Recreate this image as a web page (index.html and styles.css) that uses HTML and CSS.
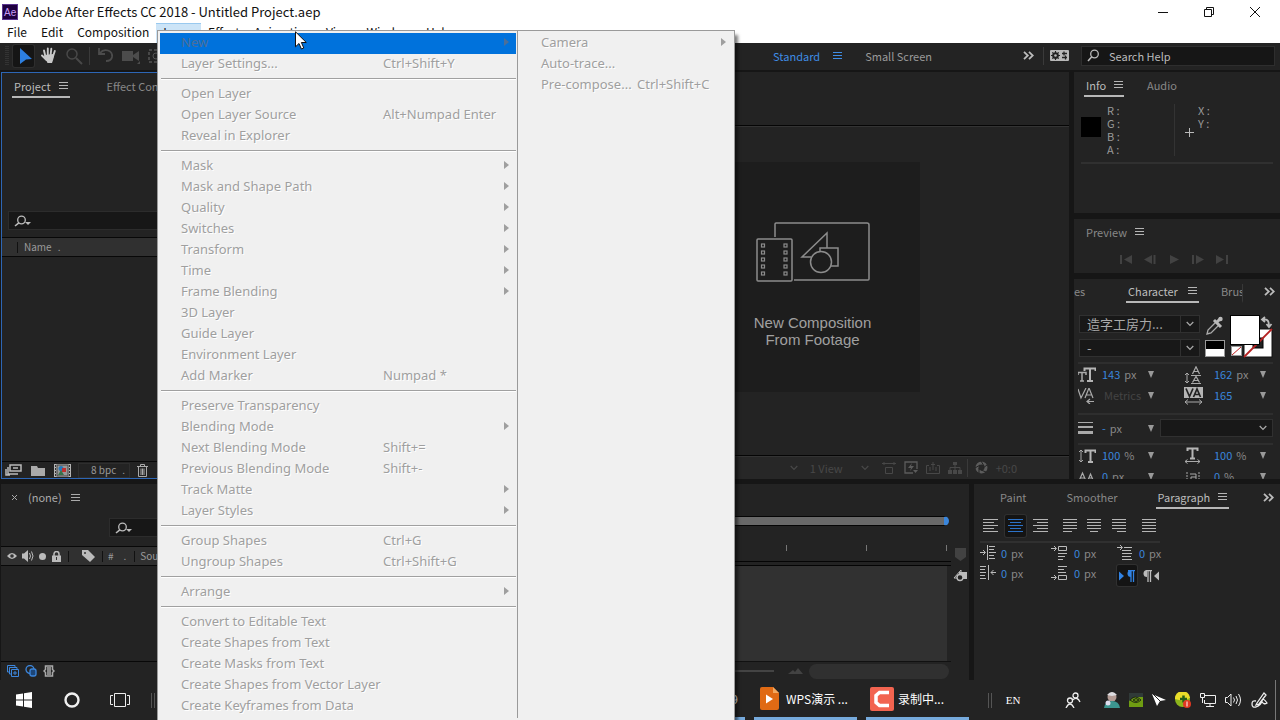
FILE: index.html
```html
<!DOCTYPE html>
<html lang="en">
<head>
<meta charset="utf-8">
<title>Adobe After Effects CC 2018 - Untitled Project.aep</title>
<link rel="stylesheet" href="styles.css">
</head>
<body>
<svg class="defs" aria-hidden="true">
  <symbol id="burger" viewBox="0 0 9 9"><path d="M0 1.5h9M0 4.5h9M0 7.5h9" stroke="currentColor" fill="none"/></symbol>
  <symbol id="more" viewBox="0 0 11 9"><path d="M1 .8l3.8 3.7L1 8.2M6 .8l3.8 3.7L6 8.2" stroke="currentColor" stroke-width="1.8" fill="none"/></symbol>
  <symbol id="find" viewBox="0 0 18 14"><circle cx="7.5" cy="5" r="3.8" stroke="currentColor" stroke-width="1.3" fill="none"/><path d="M4.8 7.8L1 12" stroke="currentColor" stroke-width="1.6"/></symbol>
  <symbol id="findmenu" viewBox="0 0 18 14"><circle cx="7.5" cy="6" r="3.8" stroke="currentColor" stroke-width="1.3" fill="none"/><path d="M4.8 8.8L1 12" stroke="currentColor" stroke-width="1.6"/><path d="M11 8h6l-3 3z" fill="currentColor"/></symbol>
  <symbol id="down" viewBox="0 0 8 6"><path d="M.7 1L4 4.500 7.300 1" stroke="currentColor" stroke-width="1.2" fill="none"/></symbol>
  <symbol id="tri" viewBox="0 0 6 7"><path d="M0 0h6L3 7z" fill="currentColor"/></symbol>
  <symbol id="sub" viewBox="0 0 5 8"><path d="M0 0l5 4-5 4z" fill="currentColor"/></symbol>
</svg>

<header class="titlebar">
  <svg class="logo" width="16" height="16" viewBox="0 0 16 16"><rect width="16" height="16" fill="#1f0040"/><rect x=".5" y=".5" width="15" height="15" fill="none" stroke="#5b3590"/><text x="2" y="12" class="logo-text">Ae</text></svg>
  <h1>Adobe After Effects CC 2018 - Untitled Project.aep</h1>
  <div class="window-buttons">
    <button aria-label="Minimize"><svg width="10" height="10"><path d="M0 5.500h10" stroke="#111"/></svg></button>
    <button aria-label="Restore"><svg width="10" height="10"><path d="M.5 2.500h7v7h-7zM2.500 2.500v-2h7v7h-2" fill="none" stroke="#111"/></svg></button>
    <button aria-label="Close"><svg width="10" height="10"><path d="M0 0l10 10M10 0L0 10" stroke="#111"/></svg></button>
  </div>
</header>
<nav class="menubar">
  <button>File</button><button>Edit</button><button>Composition</button><button class="open">Layer</button><button>Effect</button><button>Animation</button><button>View</button><button>Window</button><button>Help</button>
</nav>

<div class="toolbar">
  <svg class="grip" width="4" height="20"><path d="M1 0v20M3 0v20" stroke="#444" stroke-dasharray="1 1"/></svg>
  <button class="tool selected" aria-label="Selection"><svg width="20" height="20" viewBox="0 0 20 20"><path d="M6 2l12 11-6 .5L6 18z" fill="#2d7fe0"/></svg></button>
  <button class="tool" aria-label="Hand"><svg width="18" height="18" viewBox="0 0 18 18"><path d="M5.500 10L4 3.500M7.800 9V1.500M10.500 9l.8-7.200M12.800 10l2-6M6.500 13L2 8.500" stroke="#c8c8c8" stroke-width="1.900" stroke-linecap="round"/><path d="M4.500 8l9-1c1 3-.5 6-1.500 9H7.500C6.500 13 4.500 12 4.500 8z" fill="#c8c8c8"/></svg></button>
  <button class="tool" aria-label="Zoom"><svg width="18" height="18" viewBox="0 0 18 18"><circle cx="7" cy="7" r="5" fill="none" stroke="#484848" stroke-width="1.500"/><path d="M11 11l6 6" stroke="#484848" stroke-width="2"/></svg></button>
  <span class="divider"></span>
  <button class="tool" aria-label="Rotate"><svg width="18" height="18" viewBox="0 0 18 18"><path d="M2 1v6h6M3 6c4-5 13-3 12 4-.5 3-3 4-6 4" fill="none" stroke="#4c4c4c" stroke-width="1.800"/></svg></button>
  <button class="tool" aria-label="Camera"><svg width="20" height="18" viewBox="0 0 20 18"><path d="M1 4h11v10H1zM12 8l6-4v10l-6-4z" fill="#4c4c4c"/><path d="M16 17h3v-3z" fill="#4c4c4c"/></svg></button>
  <button class="tool" aria-label="Pan behind"><svg width="18" height="18" viewBox="0 0 18 18"><rect x="2" y="3" width="13" height="12" fill="none" stroke="#555" stroke-width="1.500" stroke-dasharray="3 2"/><circle cx="9" cy="9" r="3" fill="none" stroke="#555"/></svg></button>
  <div class="workspaces">
    <button class="current">Standard <svg width="9" height="9"><use href="#burger"/></svg></button>
    <button>Small Screen</button>
  </div>
  <button class="more" aria-label="More workspaces"><svg width="11" height="9"><use href="#more"/></svg></button>
  <span class="divider"></span>
  <button class="sync" aria-label="Sync settings"><svg width="19" height="11" viewBox="0 0 19 11"><rect width="19" height="11" rx="1" fill="#b8b8b8"/><circle cx="5.500" cy="5.500" r="2.600" fill="none" stroke="#222" stroke-width="1.500"/><path d="M5.500 1v9M1 5.500h9M2.300 2.300l6.400 6.400M8.700 2.300L2.300 8.700" stroke="#222" stroke-width="1.100"/><circle cx="5.500" cy="5.500" r="1.300" fill="#b8b8b8"/><path d="M12 3.500h5M14 1.500v4M12 7.500h5M15.500 5.500v4" stroke="#222" stroke-width="1.300"/></svg></button>
  <label class="help-search"><svg width="18" height="14"><use href="#find"/></svg><input type="text" placeholder="Search Help" aria-label="Search Help"></label>
</div>

<main class="workspace">
  <div class="upper">
    <section class="panel project">
      <div class="tabs"><button class="tab active">Project <svg width="9" height="9"><use href="#burger"/></svg></button><button class="tab">Effect Controls</button></div>
      <label class="search"><svg width="18" height="14"><use href="#findmenu"/></svg><input type="text" aria-label="Search project"></label>
      <div class="list-head"><i></i><span>Name</span><span>.</span></div>
      <div class="list-body"></div>
      <div class="project-foot">
        <svg width="17" height="12" viewBox="0 0 17 12"><path d="M5 1h11v6H5z" fill="none" stroke="#bbb" stroke-width="1.500"/><path d="M8 4h5" stroke="#bbb" stroke-width="1.500"/><path d="M3 3v7h10M1 5v6h4" fill="none" stroke="#bbb" stroke-width="1.500"/></svg>
        <svg width="14" height="11" viewBox="0 0 14 11"><path d="M0 1h6l1 2h7v8H0z" fill="#aaa"/></svg>
        <svg width="17" height="13" viewBox="0 0 17 13"><rect width="17" height="13" fill="#b5b5b5"/><path d="M1.500 1v12M15.500 1v12" stroke="#333" stroke-dasharray="2 1"/><rect x="3" y="1" width="11" height="11" fill="#999" stroke="#444"/><circle cx="7" cy="4.500" r="2.500" fill="#2878b8"/><rect x="8" y="4" width="4" height="4" fill="#c03030"/><path d="M4 11l3-5 3 5z" fill="#38704a"/></svg>
        <button class="bpc">8 bpc <span>.</span></button>
        <svg width="11" height="13" viewBox="0 0 11 13"><path d="M0 2.500h11M3.500 2V.5h4V2M1.500 3v9.500h8V3M4 4.500V11M5.500 4.500V11M7 4.500V11" fill="none" stroke="#aaa"/></svg>
      </div>
    </section>
    <section class="panel comp">
      <div class="comp-head"></div>
      <div class="comp-view">
        <button class="new-comp">
          <svg width="114" height="60" viewBox="0 0 114 60" fill="none" stroke="#8c8c8c" stroke-width="1.500"><path d="M19 15V2q0-1 1-1h91q2 0 2 2v54q0 1-1 1H38"/><rect x="1" y="17" width="35" height="42" rx="1"/><g stroke-width="1.200"><rect x="5.500" y="22" width="3" height="3"/><rect x="5.500" y="29" width="3" height="3"/><rect x="5.500" y="36" width="3" height="3"/><rect x="5.500" y="43" width="3" height="3"/><rect x="5.500" y="50" width="3" height="3"/><rect x="28" y="22" width="3" height="3"/><rect x="28" y="29" width="3" height="3"/><rect x="28" y="36" width="3" height="3"/><rect x="28" y="43" width="3" height="3"/><rect x="28" y="50" width="3" height="3"/></g><path d="M55 35H46l25-24v15M64 29v-3h18v18h-7"/><circle cx="65" cy="40" r="10.500"/></svg>
          <span>New Composition<br>From Footage</span>
        </button>
      </div>
      <div class="comp-foot">
        <svg width="8" height="6"><use href="#down"/></svg>
        <span class="view">1 View <svg width="8" height="6"><use href="#down"/></svg></span>
        <svg width="14" height="12" viewBox="0 0 14 12" fill="none" stroke="currentColor"><path d="M0 1.500h14M2 0v3M12 0v3M3.500 5.500h7v6h-7z"/></svg>
        <svg class="lit" width="14" height="13" viewBox="0 0 14 13" fill="none" stroke="currentColor" stroke-width="1.300"><path d="M9 12H1V1h12v7"/><path d="M8 2L4 7h3l-1 3 4-5H7z" fill="currentColor" stroke="none"/><path d="M9 9h5l-2.500 3z" fill="currentColor" stroke="none"/></svg>
        <svg width="14" height="12" viewBox="0 0 14 12" fill="none" stroke="currentColor"><path d="M3 3.500H.5v8h13v-8H11M7 0v8M4 5v4M10 5v4M5 2.500h4"/></svg>
        <svg width="14" height="12" viewBox="0 0 14 12"><path d="M5 0h4v3H5zM0 8h4v4H0zM5 8h4v4H5zM10 8h4v4h-4z" fill="currentColor"/><path d="M7 3v5M2 8V5.500h10V8" fill="none" stroke="currentColor"/></svg>
        <span class="divider"></span>
        <svg class="lit" width="13" height="13" viewBox="0 0 13 13"><circle cx="6.500" cy="6.500" r="4.500" fill="none" stroke="currentColor" stroke-width="3"/><path d="M6 0l3 5M12 4L8 7M11 11L6 9M4 12l0-5M0 7l5-3" stroke="#232323"/></svg>
        <span>+0:0</span>
      </div>
    </section>
    <div class="side">
      <section class="panel info">
        <div class="tabs"><button class="tab active">Info <svg width="9" height="9"><use href="#burger"/></svg></button><button class="tab">Audio</button></div>
        <div class="readout"><span class="swatch"></span><dl class="rgba"><dt>R :</dt><dt>G :</dt><dt>B :</dt><dt>A :</dt></dl><svg class="cross" width="9" height="9"><path d="M4.500 0v9M0 4.500h9" stroke="#bbb"/></svg><dl class="xy"><dt>X :</dt><dt>Y :</dt></dl></div>
      </section>
      <section class="panel preview">
        <div class="tabs"><button class="tab">Preview <svg width="9" height="9"><use href="#burger"/></svg></button></div>
        <div class="transport">
          <button aria-label="First frame"><svg width="12" height="9"><path d="M1 0v9" stroke="currentColor" stroke-width="2"/><path d="M12 0v9L4 4.500z" fill="currentColor"/></svg></button>
          <button aria-label="Previous frame"><svg width="12" height="9"><path d="M10.500 0v9" stroke="currentColor" stroke-width="2"/><path d="M8 0v9L0 4.500z" fill="currentColor"/></svg></button>
          <button aria-label="Play"><svg width="12" height="9"><path d="M2 0v9l9-4.500z" fill="currentColor"/></svg></button>
          <button aria-label="Next frame"><svg width="12" height="9"><path d="M1 0v9" stroke="currentColor" stroke-width="2"/><path d="M4 0v9l8-4.500z" fill="currentColor"/></svg></button>
          <button aria-label="Last frame"><svg width="12" height="9"><path d="M11 0v9" stroke="currentColor" stroke-width="2"/><path d="M0 0v9l8-4.500z" fill="currentColor"/></svg></button>
        </div>
      </section>
      <section class="panel character">
        <div class="tabs"><button class="tab cut-left">es</button><button class="tab active">Character <svg width="9" height="9"><use href="#burger"/></svg></button><button class="tab cut">Brus</button><button class="more" aria-label="More panels"><svg width="11" height="9"><use href="#more"/></svg></button></div>
        <div class="font-row">
          <div class="fonts">
            <div class="dropdown"><select aria-label="Font family"><option>造字工房力...</option></select><svg width="8" height="6"><use href="#down"/></svg></div>
            <div class="dropdown"><select aria-label="Font style"><option>-</option></select><svg width="8" height="6"><use href="#down"/></svg></div>
          </div>
          <svg class="colors" width="68" height="44" viewBox="0 0 68 44"><path d="M2 19l1-4 8-8 3 3-8 8z" fill="none" stroke="#aaa" stroke-width="1.300"/><path d="M9 5l7 7M12 7l4-4" stroke="#bbb" stroke-width="3"/><circle cx="15.500" cy="4" r="2.200" fill="#bbb"/><rect x=".5" y="25.500" width="19" height="16" fill="#fff" stroke="#999"/><rect x="1" y="26" width="18" height="8" fill="#000"/><rect x="39" y="14" width="28" height="28" fill="#fff" stroke="#111"/><rect x="48" y="23" width="10" height="10" fill="#222" stroke="#000"/><path d="M39 42l28-28" stroke="#b52222" stroke-width="1.800"/><rect x="25.500" y=".5" width="29" height="29" fill="#fff" stroke="#000"/><rect x="26.500" y="31.500" width="10" height="9" fill="#fff" stroke="#999"/><path d="M27 40l9-8" stroke="#c02222"/><path d="M58 4.500h2q4 0 4 6M60 2l-3 2.500 3 2.500M61.500 9l2.500 3 2.500-3" fill="none" stroke="#bbb" stroke-width="1.800"/></svg>
        </div>
        <div class="metrics">
          <svg width="18" height="16"><path d="M0 8V5.500h8V8M4 6v8M2 14h4" fill="none" stroke="#aaa" stroke-width="1.500"/><path d="M6.500 4V1.500h11V4M12 2v12M9 14h6" fill="none" stroke="#b5b5b5" stroke-width="2"/></svg><span class="val"><button>143</button> px</span><svg width="6" height="7"><use href="#tri"/></svg>
          <svg width="18" height="18"><path d="M3 7v10M1 9l2-2 2 2M1 15l2 2 2-2M7 9.500h10M7 17.500h10" fill="none" stroke="#aaa"/><path d="M8.500 8L12 .8 15.500 8M9.500 5.500h5M8.500 16.500L12 10.500l3.500 6M10 14.500h4" fill="none" stroke="#aaa" stroke-width="1.200"/></svg><span class="val"><button>162</button> px</span><svg width="6" height="7"><use href="#tri"/></svg>
          <svg width="18" height="16"><path d="M0 1l3 9L8 0M7 10l4-10 4 10M8 7h6M9 13.500h7M12 11l-3 2.500 3 2.500" fill="none" stroke="#aaa" stroke-width="1.200"/></svg><span class="val"><i>Metrics</i></span><svg width="6" height="7"><use href="#tri"/></svg>
          <svg width="19" height="18"><rect width="19" height="11" fill="#b5b5b5"/><path d="M2 1.500L5.500 9.500 9 1.500M9.500 10L13 2l3.500 8M11 7.500h4" fill="none" stroke="#222" stroke-width="1.700"/><path d="M1 15h17M4 12.500L1 15l3 2.500M15 12.500l3 2.500-3 2.500" fill="none" stroke="#aaa"/></svg><span class="val"><button>165</button></span><svg width="6" height="7"><use href="#tri"/></svg>
        </div>
        <div class="stroke-row">
          <svg width="15" height="12"><path d="M0 .5h15" stroke="#aaa"/><path d="M0 5h15" stroke="#aaa" stroke-width="2"/><path d="M0 10.500h15" stroke="#aaa" stroke-width="3"/></svg><span class="val"><button>-</button> px</span><svg width="6" height="7"><use href="#tri"/></svg>
          <div class="dropdown plain"><select aria-label="Stroke order"><option></option></select><svg width="8" height="6"><use href="#down"/></svg></div>
        </div>
        <div class="metrics last">
          <svg width="18" height="16"><path d="M3 2v12M1 4l2-2 2 2M1 12l2 2 2-2" fill="none" stroke="#aaa"/><path d="M7.500 5V2.500h10V5M12.500 3v11M10 14h5" fill="none" stroke="#b5b5b5" stroke-width="2"/></svg><span class="val"><button>100</button> %</span><svg width="6" height="7"><use href="#tri"/></svg>
          <svg width="18" height="17"><path d="M3.500 4V1.500h10V4M8.500 2v9.500M6 11.500h5" fill="none" stroke="#b5b5b5" stroke-width="2"/><path d="M1 14.500h15M3.500 12.500l-2.500 2 2.500 2M13.500 12.500l2.500 2-2.500 2" fill="none" stroke="#aaa"/></svg><span class="val"><button>100</button> %</span><svg width="6" height="7"><use href="#tri"/></svg>
          <svg width="18" height="14"><path d="M1 11L4.500 3 8 11M2 8h5M10 10l2.500-6 2.500 6M11 8h3" fill="none" stroke="#aaa" stroke-width="1.200"/></svg><span class="val"><button>0</button> px</span><svg width="6" height="7"><use href="#tri"/></svg>
          <svg width="18" height="14"><path d="M3 2v10M15 2v10" stroke="#aaa" stroke-dasharray="2 1"/><path d="M6 4h6v7H7V7h5" fill="none" stroke="#aaa"/></svg><span class="val"><button>0</button> %</span><svg width="6" height="7"><use href="#tri"/></svg>
        </div>
      </section>
    </div>
  </div>

  <div class="lower">
    <section class="panel timeline">
      <div class="layers">
        <div class="none-tab"><svg width="5" height="5"><path d="M0 0l5 5M5 0L0 5" stroke="#aaa"/></svg><span>(none)</span><svg width="9" height="9"><use href="#burger"/></svg></div>
        <label class="search"><svg width="18" height="14"><use href="#findmenu"/></svg><input type="text" aria-label="Search layers"></label>
        <div class="columns">
          <svg width="10" height="8" viewBox="0 0 10 8"><path d="M0 4q5-6 10 0-5 6-10 0z" fill="#bbb"/><circle cx="5" cy="4" r="1.800" fill="#333"/></svg>
          <svg width="12" height="12" viewBox="0 0 12 12"><path d="M0 3.500h2L6 0v12L2 8.500H0z" fill="#bbb"/><path d="M7.500 3q2 3 0 6M9.500 1.500q3 4.500 0 9" fill="none" stroke="#bbb"/></svg>
          <svg width="7" height="7"><circle cx="3.500" cy="3.500" r="3.500" fill="#bbb"/></svg>
          <svg class="lock" width="9" height="11" viewBox="0 0 9 11"><path d="M2 5V3a2.500 2.500 0 015 0v2" fill="none" stroke="#bbb" stroke-width="1.500"/><path d="M0 4.500h9V11H0z" fill="#bbb"/><path d="M4.500 6v3" stroke="#333"/></svg>
          <span class="bar"></span>
          <svg class="tag" width="13" height="12" viewBox="0 0 13 12"><path d="M0 0h6l7 7-5 5-8-7z" fill="#bbb"/><circle cx="3" cy="3" r="1" fill="#333"/></svg>
          <span class="bar"></span><span>#</span><span class="dot">.</span><span class="bar"></span><span>Source Name</span>
        </div>
        <div class="layer-body"></div>
        <div class="layer-foot">
          <svg width="12" height="12" viewBox="0 0 12 12" fill="none" stroke="#3c86dc"><path d="M3 7H.5V.5H8V3M5 9H2.500V2.500H10V4M4.500 4.500h7v7h-7zM8 6v4M6 8h4"/></svg>
          <svg width="12" height="12" viewBox="0 0 12 12" fill="none" stroke="#3c86dc" stroke-width="1.300"><circle cx="5" cy="4.500" r="4"/><rect x="5" y="4" width="6" height="7" rx="2" fill="#1d4678"/></svg>
          <svg width="12" height="12" viewBox="0 0 12 12"><path d="M4 0h4v12H4z" fill="#888"/><path d="M4 1H2.500v3.500L1 6l1.500 1.500V11H4M8 1h1.500v3.500L11 6 9.500 7.500V11H8" fill="none" stroke="#aaa" stroke-width="1.500"/></svg>
        </div>
      </div>
      <div class="time">
        <div class="navigator"><div class="range"></div></div>
        <div class="ruler"><i></i><i></i><i></i><i></i><i></i></div>
        <div class="strip"></div>
        <div class="tracks"></div>
        <div class="time-foot"><span class="slider"></span><svg width="15" height="6"><path d="M0 6l5-4 2 2 3-4 5 6z" fill="#424242"/></svg><span class="scroll"></span></div>
      </div>
      <div class="gutter">
        <svg width="11" height="13"><path d="M0 0h11v9l-5.500 4L0 9z" fill="#424242"/></svg>
        <svg width="14" height="13" viewBox="0 0 14 13"><path d="M6 3h8v7H6z" fill="#bbb"/><path d="M5 9H1l7-8v4" fill="none" stroke="#bbb"/><circle cx="7" cy="8.500" r="3" fill="#232323" stroke="#bbb" stroke-width="1.400"/></svg>
      </div>
    </section>
    <section class="panel paragraph">
      <div class="tabs"><button class="tab">Paint</button><button class="tab">Smoother</button><button class="tab active">Paragraph <svg width="9" height="9"><use href="#burger"/></svg></button><button class="more" aria-label="More panels"><svg width="11" height="9"><use href="#more"/></svg></button></div>
      <div class="aligns">
        <button aria-label="Left align"><svg width="15" height="14"><path d="M0 .5h15M0 3.500h11M0 6.500h15M0 9.500h11M0 12.500h15" stroke="currentColor"/></svg></button>
        <button class="on" aria-label="Center"><svg width="15" height="14"><path d="M0 .5h15M2 3.500h11M0 6.500h15M2 9.500h11M0 12.500h15" stroke="currentColor"/></svg></button>
        <button aria-label="Right align"><svg width="15" height="14"><path d="M0 .5h15M4 3.500h11M0 6.500h15M4 9.500h11M0 12.500h15" stroke="currentColor"/></svg></button>
        <button class="apart" aria-label="Justify last left"><svg width="15" height="14"><path d="M0 .5h14M0 3.500h14M0 6.500h14M0 9.500h14M0 12.500h9" stroke="currentColor"/></svg></button>
        <button aria-label="Justify last centered"><svg width="15" height="14"><path d="M0 .5h14M0 3.500h14M0 6.500h14M0 9.500h14M3 12.500h8" stroke="currentColor"/></svg></button>
        <button aria-label="Justify last right"><svg width="15" height="14"><path d="M0 .5h14M0 3.500h14M0 6.500h14M0 9.500h14M5 12.500h9" stroke="currentColor"/></svg></button>
        <button class="apart" aria-label="Justify all"><svg width="15" height="14"><path d="M0 .5h14M0 3.500h14M0 6.500h14M0 9.500h14M0 12.500h14" stroke="currentColor"/></svg></button>
      </div>
      <div class="indents">
        <svg width="16" height="16"><path d="M0 7.500h5M3 5l2.500 2.500L3 10M7.500 0v15M9 1.500h6M9 4.500h5M9 7.500h7M9 10.500h5M9 13.500h6" fill="none" stroke="#bbb"/></svg><span class="val"><button>0</button> px</span>
        <svg width="16" height="16"><path d="M0 3.500h5M3 1l2.500 2.500L3 6M7.500 1.500h8v4h-8zM7 8.500h9M7 11.500h7M7 14.500h5" fill="none" stroke="#bbb"/></svg><span class="val"><button>0</button> px</span>
        <svg width="16" height="16"><path d="M0 2.500h5M3 0l2.500 2.500L3 5M7 2.500h8M5 5.500h9M5 8.500h10M5 11.500h9M5 14.500h10" fill="none" stroke="#bbb"/></svg><span class="val"><button>0</button> px</span>
        <svg width="16" height="16"><path d="M0 1.500h6M0 4.500h5M0 7.500h6M0 10.500h5M0 13.500h6M8.500 0v15M11 7.500h5M13.500 5L11 7.500l2.500 2.500" fill="none" stroke="#bbb"/></svg><span class="val"><button>0</button> px</span>
        <svg width="16" height="16"><path d="M0 12.500h5M3 10l2.500 2.500L3 15M7.500 10.500h8v4h-8zM7 1.500h9M7 4.500h6M7 7.500h8" fill="none" stroke="#bbb"/></svg><span class="val"><button>0</button> px</span>
        <div class="direction">
          <button class="on" aria-label="Left to right"><svg width="16" height="12"><path d="M0 1.500v9L5 6z" fill="currentColor"/><path d="M12 0v7a3.500 3.500 0 010-7z" fill="currentColor"/><path d="M9 .5h7M12 0v12M14.500 0v12" stroke="currentColor" stroke-width="1.300"/></svg></button>
          <button aria-label="Right to left"><svg width="16" height="12"><path d="M16 1.500v9L11 6z" fill="currentColor"/><path d="M4 0v7a3.500 3.500 0 010-7z" fill="currentColor"/><path d="M3 .5h6M5 0v12M7.500 0v12" stroke="currentColor" stroke-width="1.300"/></svg></button>
        </div>
      </div>
    </section>
  </div>
</main>

<footer class="taskbar">
  <button class="sys" aria-label="Start"><svg width="16" height="16"><path d="M0 2.500l7-1v6H0zM8 1.300L16 0v7.500H8zM0 8.500h7v6l-7-1zM8 8.500h8V16l-8-1.300z" fill="#fff"/></svg></button>
  <button class="sys" aria-label="Cortana"><svg width="16" height="16"><circle cx="8" cy="8" r="6.500" fill="none" stroke="#f0f0f0" stroke-width="2.400"/></svg></button>
  <button class="sys" aria-label="Task view"><svg width="20" height="14"><path d="M4.500.5h11v13h-11zM3 2.500H.5v9H3M17 2.500h2.500v9H17" fill="none" stroke="#eee"/></svg></button>
  <span class="handle"></span>
  <div class="apps">
    <button class="app"><span>9</span></button>
    <button class="app"><svg width="19" height="23"><path d="M0 2q0-2 2-2h11l6 6v15q0 2-2 2H2q-2 0-2-2z" fill="#e06a14"/><path d="M13 0l6 6h-6z" fill="#f2a860"/><path d="M6 7.500v9l7-4.500z" fill="#fff"/></svg><span>WPS演示 ...</span></button>
    <button class="app"><svg width="24" height="24"><rect width="24" height="24" rx="2" fill="#f26450"/><path d="M19 5.500H9.500L6 8.500v7L9.500 18.500H19" fill="none" stroke="#fff" stroke-width="3.500"/></svg><span>录制中...</span></button>
  </div>
  <span class="handle second"></span>
  <button class="lang">EN</button>
  <div class="tray">
    <svg class="people" width="16" height="16" fill="none" stroke="#eee" stroke-width="1.300"><circle cx="10.500" cy="3.500" r="2.500"/><path d="M7.500 8q5-4 7.500 2"/><circle cx="5" cy="8.500" r="2.500"/><path d="M1 16q4-8 8 0"/></svg>
    <svg width="16" height="16"><circle cx="8" cy="5" r="4.500" fill="#b39b94"/><path d="M3 3q5-6 10 0L8 4z" fill="#dcdce0"/><path d="M0 16q1-7 8-7t8 7z" fill="#3c9690"/><circle cx="4" cy="11" r="2.500" fill="#dde"/></svg>
    <svg width="14" height="14"><rect width="14" height="14" fill="#6f9d12"/><path d="M0 0h14v4H6L0 8z" fill="#303a38"/><path d="M1 7q5-6 11 0-5 5-11 0zM4 7q3-3 6 0-3 3-6 0z" fill="none" stroke="#1f2b10"/></svg>
    <svg width="14" height="14"><path d="M0 1l14 6-6 1-3 5z" fill="#fff"/><path d="M1 1l7 7" stroke="#222"/></svg>
    <svg width="16" height="16"><circle cx="7.500" cy="7.500" r="7.500" fill="#8db51c"/><path d="M0 7a7.500 7.500 0 0115-1L8 9z" fill="#e9dd2a"/><path d="M5 7h7M8.500 3.500v7" stroke="#265f16" stroke-width="2.500"/><circle cx="12" cy="12" r="4" fill="#e03822"/><path d="M12 9.500v5" stroke="#fff"/></svg>
    <svg width="16" height="14"><path d="M5 2.500h10.500v8h-11V7M10 11v2.500M6 13.500h8M.5.500h4v4h-4zM2.500 5v5" fill="none" stroke="#eee"/></svg>
    <svg width="17" height="14" fill="none" stroke="#eee"><path d="M.5 4.500h2L6 1v12L2.500 9.500h-2zM8.500 4.500q2 2.500 0 5M11 3q3 4 0 8M13.500 1q4 6 0 12"/></svg>
    <svg width="17" height="16" fill="none" stroke="#eee" stroke-width="1.300"><path d="M6 11L13 1l2 2-7 9-3 1zM5 9Q1 8 1 12t4 3q5-2 6-6t5 2q-3 2-5-1"/></svg>
  </div>
</footer>

<div class="popup" role="menu">
  <div class="menu">
    <button class="hot">New<svg width="5" height="8"><use href="#sub"/></svg></button>
    <button>Layer Settings...<kbd>Ctrl+Shift+Y</kbd></button>
    <hr>
    <button>Open Layer</button>
    <button>Open Layer Source<kbd>Alt+Numpad Enter</kbd></button>
    <button>Reveal in Explorer</button>
    <hr>
    <button>Mask<svg width="5" height="8"><use href="#sub"/></svg></button>
    <button>Mask and Shape Path<svg width="5" height="8"><use href="#sub"/></svg></button>
    <button>Quality<svg width="5" height="8"><use href="#sub"/></svg></button>
    <button>Switches<svg width="5" height="8"><use href="#sub"/></svg></button>
    <button>Transform<svg width="5" height="8"><use href="#sub"/></svg></button>
    <button>Time<svg width="5" height="8"><use href="#sub"/></svg></button>
    <button>Frame Blending<svg width="5" height="8"><use href="#sub"/></svg></button>
    <button>3D Layer</button>
    <button>Guide Layer</button>
    <button>Environment Layer</button>
    <button>Add Marker<kbd>Numpad *</kbd></button>
    <hr>
    <button>Preserve Transparency</button>
    <button>Blending Mode<svg width="5" height="8"><use href="#sub"/></svg></button>
    <button>Next Blending Mode<kbd>Shift+=</kbd></button>
    <button>Previous Blending Mode<kbd>Shift+-</kbd></button>
    <button>Track Matte<svg width="5" height="8"><use href="#sub"/></svg></button>
    <button>Layer Styles<svg width="5" height="8"><use href="#sub"/></svg></button>
    <hr>
    <button>Group Shapes<kbd>Ctrl+G</kbd></button>
    <button>Ungroup Shapes<kbd>Ctrl+Shift+G</kbd></button>
    <hr>
    <button>Arrange<svg width="5" height="8"><use href="#sub"/></svg></button>
    <hr>
    <button>Convert to Editable Text</button>
    <button>Create Shapes from Text</button>
    <button>Create Masks from Text</button>
    <button>Create Shapes from Vector Layer</button>
    <button>Create Keyframes from Data</button>
  </div>
  <div class="submenu">
    <button>Camera<svg width="5" height="8"><use href="#sub"/></svg></button>
    <button>Auto-trace...</button>
    <button>Pre-compose...<kbd>Ctrl+Shift+C</kbd></button>
  </div>
</div>
<svg class="cursor" width="12" height="19" viewBox="0 0 12 19"><path d="M.5.800v15l3.500-3.300 2.400 5.500 2.400-1-2.400-5.500h4.900z" fill="#fff" stroke="#111"/></svg>
</body>
</html>
```

FILE: styles.css
```css
* { box-sizing: border-box; }
body {
  margin: 0;
  height: 100vh;
  display: flex;
  flex-direction: column;
  overflow: hidden;
  position: relative;
  background: #161616;
  color: #9a9a9a;
  font: 11px/16px "Noto Sans CJK SC", "Noto Sans", sans-serif;
}
button, input, select, kbd {
  font: inherit;
  color: inherit;
  background: none;
  border: 0;
  padding: 0;
  margin: 0;
}
svg { flex: none; display: block; }
.defs { position: absolute; width: 0; height: 0; }

.titlebar { display: flex; align-items: center; height: 23px; padding-left: 2px; background: #fff; color: #111; flex: none; }
.titlebar h1 { margin: 0 0 0 5px; font-size: 13px; line-height: 20px; font-weight: 400; }
.logo-text { font: 10px "Liberation Sans", sans-serif; fill: #c79cf5; }
.window-buttons { margin-left: auto; display: flex; }
.window-buttons button { width: 46px; height: 22px; display: flex; justify-content: center; align-items: center; }
.window-buttons button:last-child { margin-right: 2px; }

.menubar { display: flex; height: 20px; background: #fff; color: #111; flex: none; font-size: 12px; }
.menubar button { padding: 0 7px 2px; }
.menubar .open { background: #cce4f7; box-shadow: inset 0 1px #99c9ef; }

.toolbar { display: flex; align-items: center; height: 27px; flex: none; background: #232323; padding: 0 5px 2px; margin-bottom: 2px; }
.tool { width: 25px; height: 22px; display: flex; align-items: center; justify-content: center; }
.tool + .divider { margin: 0 3px; }
.tool.selected { background: #151515; margin-left: 4px; box-shadow: 0 0 0 1px #2e2e2e; border-radius: 2px; width: 21px; margin-right: 2px; }
.divider { width: 1px; height: 18px; background: #3a3a3a; }
.workspaces { margin-left: auto; display: flex; gap: 23px; }
.workspaces button { display: flex; align-items: center; gap: 13px; }
.workspaces .current { color: #3f8de6; }
.toolbar .more { margin-left: 91px; margin-right: 9px; }
.more { color: #bbb; }
.sync { margin: 0 12px 0 6px; }
.help-search { display: flex; align-items: center; gap: 4px; width: 194px; height: 20px; padding-left: 5px; background: #161616; border: 1px solid #2e2e2e; color: #bbb; }
.help-search input { width: 140px; }
.help-search input::placeholder { color: #bbb; opacity: 1; }

.workspace { flex: 1; min-height: 0; display: flex; flex-direction: column; gap: 5px; }
.upper { flex: 1; min-height: 0; display: flex; gap: 5px; }
.lower { height: 196px; display: flex; gap: 5px; }
.panel { background: #232323; overflow: hidden; }
.tabs { display: flex; height: 25px; padding-top: 6px; }
.tab { display: flex; align-items: center; gap: 8px; height: 19px; padding: 0 2px 4px; color: #888; flex: none; border-bottom: 2px solid transparent; }
.tab svg { color: #b5b5b5; }
.tab.active { color: #bcbcbc; border-bottom-color: #b8b8b8; }

.project { width: 550px; border: 1px solid #2d66b5; display: flex; flex-direction: column; margin-left: 1px; }
.project .tabs { padding-left: 10px; gap: 35px; }
.search { display: flex; align-items: center; background: #171717; border: 1px solid #2c2c2c; height: 19px; color: #bbb; padding-left: 5px; }
.search input { min-width: 0; flex: 1; }
.project .search { margin: 113px 6px 7px; }
.list-head { display: flex; gap: 6px; height: 20px; align-items: center; padding-left: 15px; background: #303030; border-top: 1px solid #080808; border-bottom: 1px solid #080808; font-size: 10px; }
.list-head i { width: 1px; height: 11px; background: #111; }
.list-body { flex: 1; }
.project-foot { display: flex; align-items: center; gap: 9px; height: 17px; padding-left: 3px; border-top: 1px solid #080808; }
.bpc { font-size: 10px; width: 52px; height: 15px; padding: 0 4px 0 12px; margin: 0 -2px; border: 1px solid #2e2e2e; display: flex; justify-content: space-between; align-items: center; }

.comp { flex: 1; display: flex; flex-direction: column; }
.comp-head { height: 54px; border-bottom: 1px solid #050505; flex: none; box-shadow: 0 1px #333; }
.comp-view { flex: 1; display: flex; justify-content: center; align-items: flex-start; padding-top: 36px; }
.new-comp { width: 214px; height: 230px; background: #1d1d1d; display: flex; flex-direction: column; align-items: center; justify-content: flex-start; gap: 32px; padding-top: 60px; font: 15px/17px "Liberation Sans", sans-serif; color: #a0a0a0; }
.comp-foot { display: flex; align-items: center; justify-content: flex-end; gap: 8px; height: 24px; padding-right: 52px; border-top: 1px solid #050505; background: #272727; color: #484848; box-shadow: inset 0 1px #333; }
.view { display: flex; align-items: center; gap: 18px; padding-left: 4px; margin-right: 5px; }
.comp-foot .divider { margin: 0 -1px 0 -3px; }
.comp-foot .lit { color: #5c5c5c; }

.side { width: 206px; flex: none; display: flex; flex-direction: column; gap: 6px; }
.info { height: 141px; padding: 0 7px; }
.info .tabs { padding-left: 3px; gap: 21px; }
.info .tab:first-child, .preview .tab { padding-right: 1px; }
.readout { display: flex; height: 67px; border-bottom: 2px solid #303030; padding-top: 7px; }
.readout dl { margin: 0; line-height: 13px; }
.swatch { width: 20px; height: 20px; background: #000; margin-top: 13px; }
.readout .rgba { padding-left: 6px; width: 74px; height: 52px; border-right: 1px solid #333; }
.cross { margin: 24px 4px 0 10px; }
.preview { height: 54px; }
.preview .tabs { padding-left: 10px; }
.transport { display: flex; gap: 12px; padding: 11px 0 0 46px; color: #424242; }
.transport button { height: 9px; }

.character { flex: 1; min-height: 0; padding-right: 7px; }
.character .tabs { padding-top: 5px; height: 36px; }
.cut-left { width: 52px; padding-left: 0; }
.character .active { gap: 10px; }
.cut { width: 22px; margin-left: 22px; padding-left: 0; padding-right: 0; overflow: hidden; border-right: 1px solid #383838; }
.tabs .more { margin-left: auto; margin-right: -2px; height: 14px; }
.font-row { display: flex; gap: 5px; padding-left: 5px; height: 47px; }
.fonts { display: flex; flex-direction: column; gap: 6px; width: 122px; }
.dropdown { display: flex; align-items: center; height: 18px; background: #181818; border: 1px solid #303030; padding-right: 5px; color: #aaa; }
.dropdown select { appearance: none; flex: 1; min-width: 0; padding-left: 7px; margin-right: 5px; height: 16px; border-right: 1px solid #303030; font-size: 13px; }
.plain select { border-right: 0; }
.metrics, .stroke-row { display: grid; grid-template-columns: 24px 46px 36px 30px 46px 6px; grid-auto-rows: 21px; align-items: center; margin-left: 4px; border-top: 2px solid #2e2e2e; color: #999; }
.metrics { height: 51px; }
.stroke-row { grid-template-columns: 24px 46px 12px 1fr; grid-auto-rows: 26px; height: 30px; }
.val { display: flex; gap: 4px; color: #888; padding-bottom: 1px; }
.val button { color: #3a86dc; }
.val i { font-style: normal; color: #444; padding-left: 2px; }

.timeline { flex: 1; display: flex; margin-left: 1px; }
.layers { width: 400px; display: flex; flex-direction: column; }
.none-tab { display: flex; align-items: center; gap: 11px; height: 26px; padding-left: 11px; color: #aaa; }
.none-tab svg:last-child { margin-left: -2px; }
.layers .search { margin: 8px 0 9px 108px; }
.columns { display: flex; align-items: center; gap: 5px; height: 20px; padding-left: 6px; background: #303030; border-top: 1px solid #080808; border-bottom: 1px solid #080808; font-size: 10px; }
.lock { margin-left: 1px; margin-right: 2px; }
.bar { width: 1px; height: 11px; background: #111; }
.tag { margin: 0 2px 0 8px; }
.dot { margin: 0 3px 0 5px; }
.layer-body { flex: 1; }
.layer-foot { display: flex; align-items: center; gap: 6px; height: 19px; padding-left: 6px; border-top: 1px solid #080808; }
.time { flex: 1; display: flex; flex-direction: column; }
.navigator { height: 41px; padding: 32px 2px 0 0; }
.range { height: 10px; background: #696969; border: 1px solid #050505; border-right: 5px solid #3a86dc; border-radius: 0 5px 5px 0; }
.ruler { display: flex; justify-content: flex-end; gap: 79px; height: 36px; padding: 20px 4px 0; }
.ruler i { width: 1px; height: 6px; background: #777; }
.strip { height: 5px; border-top: 1px solid #050505; border-bottom: 1px solid #050505; }
.tracks { flex: 1; background: #313131; margin-right: 4px; }
.time-foot { display: flex; justify-content: flex-end; align-items: center; gap: 14px; height: 19px; padding-right: 2px; border-top: 1px solid #111; }
.slider { width: 70px; height: 2px; background: #444; }
.scroll { width: 140px; height: 15px; border-radius: 8px; background: #303030; margin-left: -8px; }
.gutter { width: 18px; display: flex; flex-direction: column; align-items: center; gap: 8px; padding-top: 64px; }

.paragraph { width: 306px; flex: none; padding: 0 6px; }
.paragraph .tabs { gap: 36px; padding-left: 18px; }
.paragraph .tabs .more { margin-left: -2px; margin-right: 0; }
.aligns { display: flex; align-items: center; gap: 4px; height: 34px; padding-top: 2px; width: 180px; border-bottom: 2px solid #303030; color: #b5b5b5; }
.aligns button { width: 21px; height: 22px; display: flex; align-items: center; justify-content: center; }
.aligns .apart { margin-left: 5px; }
.on { background: #141414; box-shadow: 0 0 0 1px #303030; color: #3183e4; border-radius: 2px; }
.aligns .on { color: #2c72c8; }
.indents { display: grid; grid-template-columns: 21px 50px 23px 43px 22px 30px; grid-auto-rows: 20px; align-items: center; }
.direction { grid-column: 5 / 7; display: flex; gap: 4px; align-self: start; padding-top: 2px; }
.direction button { width: 20px; height: 21px; display: flex; align-items: center; justify-content: center; }
.direction button + button { color: #bbb; }

.taskbar { display: flex; align-items: center; height: 40px; flex: none; background: #232323; color: #fff; padding-right: 4px; box-shadow: inset -4px 0 #232323, inset -5px 0 #777; }
.sys { width: 48px; height: 40px; display: flex; align-items: center; justify-content: center; }
.handle { width: 4px; height: 15px; border-left: 1px solid #555; border-right: 1px solid #555; margin-left: 7px; }
.apps { margin-left: auto; display: flex; gap: 9px; font-size: 12px; }
.app { width: 103px; height: 40px; display: flex; align-items: center; gap: 4px; padding: 0 4px 0 6px; border-bottom: 3px solid #76aadc; white-space: nowrap; }
.app:nth-child(2) { gap: 7px; }
.app:last-child { padding-left: 4px; }
.app:first-child { justify-content: flex-end; padding-right: 7px; }
.handle.second { margin-left: 19px; margin-right: 13px; }
.lang { font: 11px/14px "Liberation Serif", serif; width: 16px; margin-right: 3px; }
.tray { display: flex; align-items: center; gap: 9px; width: 252px; padding-left: 41px; }
.people { margin-right: 14px; }

.popup { position: absolute; left: 157px; top: 30px; bottom: 0; display: flex; background: #f0f0f0; border: 1px solid #9a9a9a; border-bottom: 0; box-shadow: 4px 4px 3px -1px rgba(0, 0, 0, 0.5); color: #9f9f9f; font: 13px/16px "Noto Sans", sans-serif; }
.menu { width: 360px; padding: 2px 1px 0 2px; height: 687px; border-right: 1px solid #9a9a9a; }
.submenu { width: 216px; padding-top: 2px; }
.popup button { display: flex; align-items: center; position: relative; width: 100%; height: 21px; padding: 0 0 3px 21px; text-shadow: 1px 1px #fff; }
.popup .submenu button { padding-left: 23px; }
.popup .hot { background: #0072dc; color: #4c6f98; text-shadow: none; }
.popup button svg { margin-left: auto; margin-right: 7px; }
.popup .submenu svg { margin-right: 8px; }
.popup kbd { position: absolute; left: 223px; }
.popup .submenu kbd { left: 119px; }
.popup hr { height: 2px; margin: 3px 0 4px 1px; border: 0; background: #a0a0a0; border-bottom: 1px solid #fff; }
.cursor { position: absolute; left: 295px; top: 31px; }
```
